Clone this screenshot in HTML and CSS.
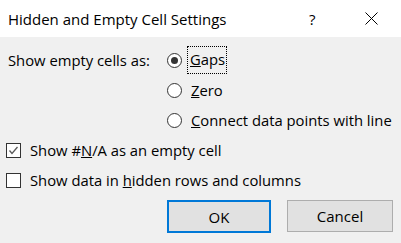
FILE: index.html
```
<!DOCTYPE html>
<html lang="en">
  <head>
    <meta charset="UTF-8" />
    <title>Hidden and Empty Cell Settings</title>
    <link rel="stylesheet" href="styles.css">
  </head>
  <body>
    <div class="dialog">
      <div class="titlebar">
        <span class="title">Hidden and Empty Cell Settings</span>
        <span class="help">?</span>
        <span class="close">
          <svg width="13" height="13" viewBox="0 0 13 13">
            <path d="M0.5 0.5 L12.5 12.5 M12.5 0.5 L0.5 12.5" stroke="#000" stroke-width="1" fill="none" />
          </svg>
        </span>
      </div>
      <div class="content">
        <div class="empty-cells">
          <span class="empty-label">Show empty cells as:</span>
          <div class="radios">
            <label class="radio-row">
              <span class="radio checked"></span>
              <span class="focus"><u>G</u>aps</span>
            </label>
            <label class="radio-row">
              <span class="radio"></span>
              <span><u>Z</u>ero</span>
            </label>
            <label class="radio-row">
              <span class="radio"></span>
              <span><u>C</u>onnect data points with line</span>
            </label>
          </div>
        </div>
        <label class="check-row">
          <span class="checkbox">
            <svg width="11" height="11" viewBox="0 0 11 11">
              <path d="M1.5 5.5 L4 8.5 L9.5 2" stroke="#5a5a5a" stroke-width="1.3" fill="none" />
            </svg>
          </span>
          <span>Show #<u>N</u>/A as an empty cell</span>
        </label>
        <label class="check-row">
          <span class="checkbox"></span>
          <span>Show data in <u>h</u>idden rows and columns</span>
        </label>
        <div class="buttons">
          <button class="btn btn-default">OK</button>
          <button class="btn">Cancel</button>
        </div>
      </div>
    </div>
  </body>
</html>
```

FILE: styles.css
```
body {
  margin: 0;
  background-color: #f0f0f0;
  font-family: "Open Sans", "Noto Sans", sans-serif;
  font-size: 14.8px;
  color: #000;
}
.dialog {
  width: 401px;
  height: 243px;
  overflow: hidden;
}
.titlebar {
  display: flex;
  align-items: center;
  height: 37px;
  background-color: #fff;
  padding-left: 8px;
  font-size: 15px;
}
.title {
  flex: 1;
}
.help {
  width: 56px;
  font-size: 15px;
}
.close {
  display: flex;
  width: 36px;
}
.content {
  padding: 8px 8px 0 6px;
}
.empty-cells {
  display: flex;
}
.empty-label {
  width: 159px;
  padding-left: 2px;
  line-height: 30px;
}
.radios {
  display: flex;
  flex-direction: column;
}
.radio-row {
  display: flex;
  align-items: center;
  gap: 9px;
  height: 30px;
}
.radio {
  width: 13px;
  height: 13px;
  border: 1px solid #333;
  border-radius: 50%;
  background-color: #fff;
  display: flex;
  align-items: center;
  justify-content: center;
}
.radio.checked::after {
  content: "";
  width: 7px;
  height: 7px;
  border-radius: 50%;
  background-color: #333;
}
.focus {
  outline: 1px dotted #000;
  outline-offset: 0;
  padding: 2px 1px 4px 2px;
  margin-left: -3px;
}
.check-row {
  display: flex;
  align-items: center;
  gap: 9px;
  height: 30px;
}
.checkbox {
  width: 13px;
  height: 13px;
  border: 1px solid #333;
  background-color: #fff;
  display: flex;
  align-items: center;
  justify-content: center;
}
.buttons {
  display: flex;
  justify-content: flex-end;
  gap: 16px;
  margin-top: 5px;
}
.btn {
  font-family: inherit;
  font-size: 15px;
  width: 106px;
  height: 32px;
  background-color: #e1e1e1;
  border: 1px solid #adadad;
  color: #000;
}
.btn-default {
  width: 104px;
  height: 33px;
  border: 2px solid #0078d7;
}
```
